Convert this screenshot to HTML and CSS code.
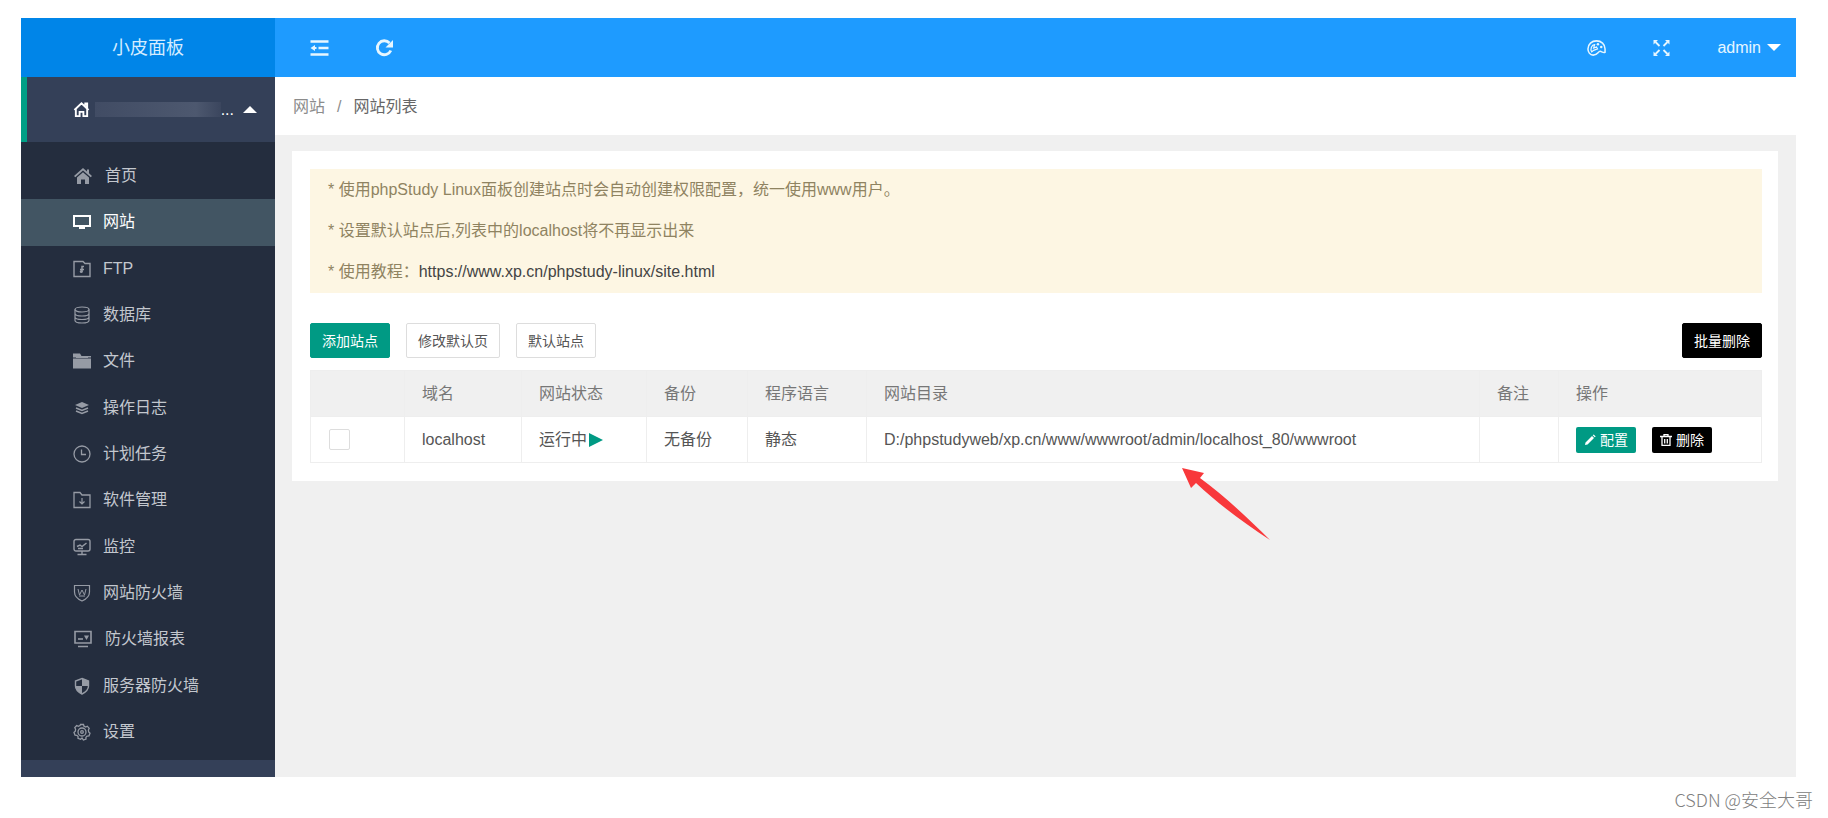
FILE: index.html
```html
<!DOCTYPE html>
<html lang="zh-CN">
<head>
  <meta charset="UTF-8" />
  <meta name="viewport" content="width=device-width, initial-scale=1.0"/>
  <title>小皮面板</title>
  <link rel="stylesheet" href="styles.css">
</head>
<body>
  <div class="panel">
    <aside class="sidebar">
      <div class="logo">小皮面板</div>
      <button type="button" class="server" aria-label="服务器">
        <svg class="server-icon" viewBox="0 0 18 18"><path d="M3 8v8h4v-4.500h4V16h4V8M1.500 9.500L9 2.500l7.500 7M13 5V2.500h2V8" fill="none" stroke="currentColor" stroke-width="2"/></svg>
        <span class="server-name"></span>
        <span>...</span>
        <span class="caret caret-up"></span>
      </button>
      <nav class="menu">
        <a href="#">
          <svg class="wide" viewBox="0 0 18 18"><path d="M9 1L0 9l1.300 1.300L9 3.600l7.700 6.700L18 9l-3-2.700V2.500h-2v2z" fill="currentColor"/><path d="M9 5.200L3 10.400V17h4v-4.500h4V17h4v-6.600z" fill="currentColor"/></svg>
          <span>首页</span>
        </a>
        <a href="#" class="active">
          <svg viewBox="0 0 18 18"><path d="M1 3h16v10H1z" fill="none" stroke="currentColor" stroke-width="2"/><path d="M6 13h6v3H6z" fill="currentColor"/></svg>
          <span>网站</span>
        </a>
        <a href="#">
          <svg viewBox="0 0 18 18"><path d="M1 1.500h9l2 2h5v13H1z" fill="none" stroke="currentColor" stroke-width="1.400"/><path d="M11 6.500H9v5M7 9.500h4" fill="none" stroke="currentColor" stroke-width="1.500"/><circle cx="8.300" cy="11.500" r="1.500" fill="currentColor"/></svg>
          <span>FTP</span>
        </a>
        <a href="#">
          <svg viewBox="0 0 18 18"><g fill="none" stroke="currentColor" stroke-width="1.200"><ellipse cx="9" cy="3.500" rx="7" ry="2.500"/><path d="M2 3.500v11c0 1.400 3 2.500 7 2.500s7-1.100 7-2.500v-11M2 7.500C2 8.900 5 10 9 10s7-1.100 7-2.500M2 11c0 1.400 3 2.500 7 2.500s7-1.100 7-2.500"/></g></svg>
          <span>数据库</span>
        </a>
        <a href="#">
          <svg viewBox="0 0 18 18"><path d="M0 1.500h7l1.500 2.500H18v1.500H0z" fill="currentColor"/><path d="M0 6.500h18v10H0zM3 5h12v1H3z" fill="currentColor"/></svg>
          <span>文件</span>
        </a>
        <a href="#">
          <svg viewBox="0 0 18 18"><path d="M9 3l7 3-7 3-7-3z" fill="currentColor"/><path d="M3 9l6 2.500L15 9M3 12l6 2.500 6-2.500" fill="none" stroke="currentColor" stroke-width="1.600"/></svg>
          <span>操作日志</span>
        </a>
        <a href="#">
          <svg viewBox="0 0 18 18"><g fill="none" stroke="currentColor" stroke-width="1.300"><circle cx="9" cy="9" r="8"/><path d="M8.500 4.500v5H13"/></g></svg>
          <span>计划任务</span>
        </a>
        <a href="#">
          <svg viewBox="0 0 18 18"><path d="M1 1.500h6l2 2.500h8v12.500H1z" fill="none" stroke="currentColor" stroke-width="1.300"/><path d="M9 7v6M6.500 10.500L9 13l2.500-2.500" fill="none" stroke="currentColor" stroke-width="1.200"/></svg>
          <span>软件管理</span>
        </a>
        <a href="#">
          <svg viewBox="0 0 18 18"><g fill="none" stroke="currentColor" stroke-width="1.400"><rect x="1" y="1.500" width="16" height="11.500" rx="2"/><path d="M4 8.500l3-1.500 2 1.500L13.500 5M9 13v3M4.500 16.500h9M5 10.500h5"/></g></svg>
          <span>监控</span>
        </a>
        <a href="#">
          <svg viewBox="0 0 18 18"><path d="M1.500 1.500h15V8c0 4-3 7-7.500 9-4.500-2-7.500-5-7.500-9z" fill="none" stroke="currentColor" stroke-width="1.200"/><path d="M5 5l1.500 6L9 6l2.500 5L13 5M6 12h6" fill="none" stroke="currentColor"/></svg>
          <span>网站防火墙</span>
        </a>
        <a href="#">
          <svg class="wide" viewBox="0 0 18 18"><path d="M1 1.500h16V13H1zM4 16.500h10" fill="none" stroke="currentColor" stroke-width="1.600"/><path d="M4 9h5" stroke="currentColor" stroke-width="1.600"/><path d="M10 5.500h5L12.500 10z" fill="currentColor"/></svg>
          <span>防火墙报表</span>
        </a>
        <a href="#">
          <svg viewBox="0 0 18 18"><path d="M9 1.500L15.500 4v5c0 3.500-2.500 6-6.500 8-4-2-6.500-4.500-6.500-8V4z" fill="none" stroke="currentColor" stroke-width="1.400"/><path d="M9 1.500L15.500 4v5H9zM2.500 9H9v8c-4-2-6.500-4.500-6.500-8z" fill="currentColor"/></svg>
          <span>服务器防火墙</span>
        </a>
        <a href="#">
          <svg viewBox="0 0 18 18"><g fill="none" stroke="currentColor" stroke-width="1.300"><path d="M7.500 1.500h3l.5 1.700 1.700.8 1.600-.8 1.900 2.200-.8 1.600.3 2 1.300 1.200-1 2.600-1.900.2-1.200 1.400.1 1.700-2.600.9L9 15l-1.400 1.300-2.600-.9.100-1.700L3.900 12.300 2 12.100 1 9.500l1.300-1.200.3-2-.8-1.600 1.900-2.200 1.600.8 1.700-.8z"/><circle cx="9" cy="9" r="4"/><circle cx="9" cy="9" r="1.300"/></g></svg>
          <span>设置</span>
        </a>
      </nav>
    </aside>

    <main class="main">
      <header class="topbar">
        <button type="button" class="icon-btn" aria-label="收起菜单">
          <svg viewBox="0 0 18 18"><path d="M0 2.500h18M8 9h10M0 15.500h18" stroke="currentColor" stroke-width="2.400" fill="none"/><path d="M0 9l4.500-3v6zM4 8h2v2H4z" fill="currentColor"/></svg>
        </button>
        <button type="button" class="icon-btn" aria-label="刷新">
          <svg viewBox="0 0 18 18"><path d="M15.300 11.500A7 7 0 1 1 14 4" fill="none" stroke="currentColor" stroke-width="2.800"/><path d="M17.500 1v7.500H10z" fill="currentColor"/></svg>
        </button>
        <div class="topbar-right">
          <button type="button" class="icon-btn" aria-label="主题">
            <svg viewBox="0 0 20 18"><path d="M6.500 16.500C3 16.500 1 13 1 10c0-5 4-8.500 9-8.500s9 3.500 9 8.500v3.500c-2 .8-3.500-.8-5-1-2.500-.2-2.500 4-7.500 4z" fill="none" stroke="currentColor" stroke-width="1.600"/><path d="M5 13c-2-3 0-7.500 3-7.500L7 9l3-1 1 2-4 1.500z" fill="none" stroke="currentColor" stroke-width="1.300"/><circle cx="11.500" cy="5" r="1.300" fill="currentColor"/><circle cx="15" cy="8" r="1.300" fill="currentColor"/></svg>
          </button>
          <button type="button" class="icon-btn" aria-label="全屏">
            <svg viewBox="0 0 18 18"><path d="M1 1h4.500L1 5.500zM17 1v4.500L12.500 1zM1 17v-4.500L5.500 17zM17 17h-4.500l4.500-4.500z" fill="currentColor"/><path d="M3 3l4 4M15 3l-4 4M3 15l4-4M15 15l-4-4" stroke="currentColor" stroke-width="1.800"/></svg>
          </button>
          <button type="button" class="user">admin <span class="caret caret-down"></span></button>
        </div>
      </header>

      <div class="breadcrumb">
        <a href="#">网站</a>
        <span>/</span>
        <span class="current">网站列表</span>
      </div>

      <section class="card">
        <div class="notice">
          <p>* 使用phpStudy Linux面板创建站点时会自动创建权限配置，统一使用www用户。</p>
          <p>* 设置默认站点后,列表中的localhost将不再显示出来</p>
          <p>* 使用教程：<a href="#">https://www.xp.cn/phpstudy-linux/site.html</a></p>
        </div>

        <div class="toolbar">
          <button type="button" class="btn btn-green">添加站点</button>
          <button type="button" class="btn">修改默认页</button>
          <button type="button" class="btn">默认站点</button>
          <button type="button" class="btn btn-black btn-last">批量删除</button>
        </div>

        <table class="sites">
          <colgroup>
            <col class="col-check"><col class="col-domain"><col class="col-status"><col class="col-backup">
            <col class="col-lang"><col><col class="col-note"><col class="col-action">
          </colgroup>
          <thead>
            <tr>
              <th></th>
              <th>域名</th>
              <th>网站状态</th>
              <th>备份</th>
              <th>程序语言</th>
              <th>网站目录</th>
              <th>备注</th>
              <th>操作</th>
            </tr>
          </thead>
          <tbody>
            <tr>
              <td><input type="checkbox" class="check" aria-label="选择 localhost"></td>
              <td>localhost</td>
              <td>运行中<span class="play"></span></td>
              <td>无备份</td>
              <td>静态</td>
              <td>D:/phpstudyweb/xp.cn/www/wwwroot/admin/localhost_80/wwwroot</td>
              <td></td>
              <td>
                <div class="actions">
                  <button type="button" class="btn-sm btn-green">
                    <svg viewBox="0 0 12 12"><path d="M1 11l.5-2.500 6.500-6.500 2 2L3.500 10.500zM8.700 1.300l1-.9 2 2-1 .9z" fill="currentColor"/></svg>
                    配置
                  </button>
                  <button type="button" class="btn-sm btn-black">
                    <svg viewBox="0 0 12 12"><path d="M0 2.500h12M4 2V.7h4V2M2 3v8.300h8V3M4.700 5v4.500M7.300 5v4.500" fill="none" stroke="currentColor" stroke-width="1.300"/></svg>
                    删除
                  </button>
                </div>
              </td>
            </tr>
          </tbody>
        </table>

        <svg class="arrow" viewBox="0 0 90 74"><path d="M1 1l22 5-4 5C42 28 66 50 89 73 62 55 37 37 15 16l-5 5z" fill="#f8383b"/></svg>
      </section>
    </main>
  </div>
  <footer class="watermark">CSDN @安全大哥</footer>
</body>
</html>
```

FILE: styles.css
```css
* { box-sizing: border-box; }
body {
  margin: 0;
  min-height: 100vh;
  padding: 18px 0 0 21px;
  display: flex;
  flex-direction: column;
  background: #fff;
  color: #555;
  font: 16px/24px "Liberation Sans", "Noto Sans CJK SC", sans-serif;
}
button { font: inherit; color: inherit; background: none; border: none; padding: 0; cursor: pointer; }
a { color: inherit; text-decoration: none; }
p { margin: 0; }
svg { display: block; flex: none; }

.panel { flex: 1; display: flex; margin-right: 32px; }

/* sidebar */
.sidebar {
  width: 254px;
  flex: none;
  display: flex;
  flex-direction: column;
  padding-bottom: 17px;
  background: #344058;
  color: #c3c7ce;
}
.logo {
  height: 59px;
  line-height: 60px;
  text-align: center;
  font-size: 18px;
  color: #d5ecff;
  background: #0085e8;
}
.server {
  height: 65px;
  display: flex;
  align-items: center;
  padding: 0 18px 0 46px;
  border-left: 6px solid #009f86;
  color: #fff;
}
.server-icon { width: 17px; height: 17px; margin-right: 5px; }
.server-name { flex: 1; height: 15px; background: linear-gradient(90deg, #414c64, #4d586f 80%, #3b465e); }
.server .caret { margin-left: 9px; }
.caret { display: inline-block; border: 7px solid transparent; }
.caret-up { border-top: 0; border-bottom-color: #fff; }
.caret-down { border-bottom: 0; border-top-color: #fff; }

.menu {
  flex: 1;
  display: flex;
  flex-direction: column;
  padding: 11px 0 5px;
  background: #242d3e;
}
.menu a { flex: 1; display: flex; align-items: center; gap: 12px; padding-left: 52px; }
.menu svg { width: 18px; height: 18px; color: #969ba5; }
.menu .wide { width: 20px; }
.menu .active { background: #425563; color: #fff; }
.menu .active svg { color: #fff; }

/* top bar */
.main { flex: 1; min-width: 0; background: #f0f0f0; }
.topbar {
  height: 59px;
  display: flex;
  align-items: center;
  gap: 46px;
  padding: 0 15px 0 35px;
  background: #1e9bff;
  color: #e6f6ff;
}
.icon-btn svg { width: 19px; height: 18px; }
.topbar-right { margin-left: auto; display: flex; align-items: center; gap: 46px; }
.user { display: flex; align-items: center; gap: 6px; }

.breadcrumb {
  height: 58px;
  display: flex;
  align-items: center;
  gap: 12px;
  padding: 2px 18px 0;
  background: #fff;
  color: #8c8c8c;
}
.breadcrumb .current { color: #666; }

/* content */
.card { position: relative; margin: 16px 18px 0 17px; padding: 18px 16px 18px 18px; background: #fff; }
.notice { padding: 0 18px 1px; line-height: 41px; background: #fdf6e3; color: #8f8361; }
.notice a { color: #444; }

.toolbar { display: flex; gap: 16px; margin: 30px 0 12px; }
.btn {
  height: 35px;
  padding: 0 11px;
  border: 1px solid #ddd;
  border-radius: 2px;
  background: #fff;
  font-size: 14px;
}
.btn-green { background: #009a84; border-color: #009a84; color: #fff; }
.btn-black { background: #000; border-color: #000; color: #fff; }
.btn-last { margin-left: auto; }

.sites { width: 100%; table-layout: fixed; border-collapse: collapse; }
.sites th, .sites td { height: 46px; padding: 0 17px; text-align: left; font-weight: normal; border: 1px solid #eee; }
.sites th { background: #f0f0f0; color: #777; }
.col-check { width: 94px; }
.col-domain { width: 117px; }
.col-status { width: 125px; }
.col-backup { width: 101px; }
.col-lang { width: 119px; }
.col-note { width: 79px; }
.col-action { width: 203px; }
.check {
  appearance: none;
  display: block;
  width: 21px;
  height: 21px;
  margin: 0 1px;
  border: 1px solid #ddd;
  border-radius: 2px;
}
.play {
  display: inline-block;
  border: 7px solid transparent;
  border-left: 14px solid #009a84;
  border-right: 0;
  margin-left: 2px;
  vertical-align: -2px;
}
.actions { display: flex; gap: 16px; }
.btn-sm {
  height: 26px;
  display: flex;
  align-items: center;
  gap: 4px;
  padding: 0 8px;
  border-radius: 2px;
  font-size: 14px;
}
.btn-sm svg { width: 12px; height: 12px; }

/* pointer over the site directory */
.arrow { position: absolute; left: 889px; top: 316px; width: 90px; height: 74px; }

.watermark {
  height: 41px;
  padding-right: 15px;
  line-height: 44px;
  text-align: right;
  font-family: "Noto Sans CJK SC", sans-serif;
  font-size: 18px;
  font-weight: 300;
  color: #808080;
}
```
